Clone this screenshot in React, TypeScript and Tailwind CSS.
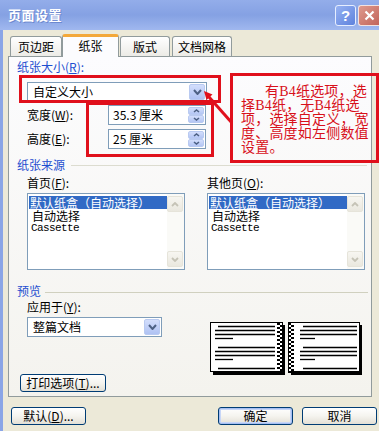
import React from "react";

function Chevron({ up = false, color = "#4D6185", w = 9, h = 6, sw = 2 }: { up?: boolean; color?: string; w?: number; h?: number; sw?: number }) {
  const d = up ? `M1 ${h - 1}L${w / 2} 1L${w - 1} ${h - 1}` : `M1 1L${w / 2} ${h - 1}L${w - 1} 1`;
  return (
    <svg width={w} height={h} viewBox={`0 0 ${w} ${h}`}>
      <path d={d} stroke={color} strokeWidth={sw} fill="none" />
    </svg>
  );
}

function DropButton() {
  return (
    <div className="w-[16px] shrink-0 rounded-[2px] border border-[#B9CAF1] bg-gradient-to-b from-[#D3DEFC] to-[#AFC2F3] flex items-center justify-center">
      <Chevron />
    </div>
  );
}

function Combo({ className, text }: { className: string; text: string }) {
  return (
    <div className={`flex bg-white border border-[#7F9DB9] p-[1px] ${className}`}>
      <div className="flex-1 flex items-center pl-[4px] whitespace-nowrap">{text}</div>
      <DropButton />
    </div>
  );
}

function Spin({ text }: { text: string }) {
  return (
    <div className="flex w-[98px] h-[20px] bg-white border border-[#7F9DB9] p-[1px]">
      <div className="flex-1 flex items-center pl-[3px] whitespace-nowrap">{text}</div>
      <div className="w-[16px] flex flex-col">
        <div className="flex-1 rounded-[2px] border border-[#B9CAF1] bg-gradient-to-b from-[#D3DEFC] to-[#B4C6F4] flex items-center justify-center">
          <Chevron up w={7} h={4} sw={1.6} />
        </div>
        <div className="flex-1 rounded-[2px] border border-[#B9CAF1] bg-gradient-to-b from-[#D3DEFC] to-[#B4C6F4] flex items-center justify-center">
          <Chevron w={7} h={4} sw={1.6} />
        </div>
      </div>
    </div>
  );
}

function ScrollBtn({ up = false }: { up?: boolean }) {
  return (
    <div className="h-[16px] rounded-[2px] border border-[#E6E4DA] bg-gradient-to-b from-[#F7F6F1] to-[#EAE8DF] flex items-center justify-center">
      <Chevron up={up} color="#C5C3B6" w={8} h={5} sw={1.8} />
    </div>
  );
}

function ListBox() {
  return (
    <div className="w-[158px] h-[77px] border border-[#7F9DB9] bg-white flex">
      <div className="flex-1 pt-[2px] pl-[1px]">
        <div className="h-[13px] leading-[13px] bg-[#316AC5] text-white pl-[1px] whitespace-nowrap">默认纸盒（自动选择）</div>
        <div className="h-[13px] leading-[13px] pl-[3px] whitespace-nowrap">自动选择</div>
        <div className="h-[13px] leading-[13px] pl-[2px] font-['Liberation_Mono',monospace] text-[11px] tracking-[-0.6px]">Cassette</div>
      </div>
      <div className="w-[17px] flex flex-col justify-between bg-[#FAFAF7] py-[2px] pr-[1px]">
        <ScrollBtn up />
        <ScrollBtn />
      </div>
    </div>
  );
}

function Btn({ className = "", children, def = false }: { className?: string; children: React.ReactNode; def?: boolean }) {
  return (
    <div
      className={`h-[18px] flex items-center justify-center rounded-[3px] border border-[#003C74] bg-gradient-to-b from-[#FFFFFF] via-[#F5F4EF] to-[#E3E0D6] whitespace-nowrap ${
        def ? "shadow-[inset_0_0_0_1px_#A6BFF2,inset_0_0_0_2px_#C7D6F7]" : ""
      } ${className}`}
    >
      {children}
    </div>
  );
}

function U({ c }: { c: string }) {
  return <span className="underline underline-offset-[1px]">{c}</span>;
}

function Tab({ className, children, selected = false }: { className: string; children: React.ReactNode; selected?: boolean }) {
  if (selected) {
    return (
      <div className={`h-[23px] -mb-px relative z-10 flex items-center justify-center rounded-t-[3px] border border-b-0 border-[#919B9C] border-t-[3px] border-t-[#F3A83A] bg-[#FCFCFE] pb-[2px] ${className}`}>
        {children}
      </div>
    );
  }
  return (
    <div className={`h-[20px] flex items-center justify-center rounded-t-[3px] border border-b-0 border-[#919B9C] bg-gradient-to-b from-[#FFFFFF] to-[#ECEBE6] ${className}`}>
      {children}
    </div>
  );
}

function Preview() {
  const leftLines: [number, number, number][] = [
    [8, 65, 4], [5, 65, 8], [5, 65, 12], [5, 23, 16],
    [8, 65, 25], [5, 65, 29], [5, 65, 33], [5, 23, 37],
    [8, 65, 46],
  ];
  const checks = [];
  for (let y = 1; y < 50; y += 4) {
    checks.push(<rect key={"a" + y} x={67} y={y} width={3} height={2} fill="#000" />);
    checks.push(<rect key={"b" + y} x={70} y={y + 2} width={3} height={2} fill="#000" />);
    checks.push(<rect key={"c" + y} x={78} y={y} width={3} height={2} fill="#000" />);
    checks.push(<rect key={"d" + y} x={81} y={y + 2} width={3} height={2} fill="#000" />);
  }
  return (
    <svg width="152" height="54" viewBox="0 0 152 54">
      <rect x="3" y="3" width="72" height="50" fill="#000" />
      <rect x="81" y="3" width="71" height="50" fill="#000" />
      <rect x="0.5" y="0.5" width="72" height="49" fill="#fff" stroke="#000" />
      <rect x="78.5" y="0.5" width="71" height="49" fill="#fff" stroke="#000" />
      {checks}
      {leftLines.map(([a, b, y], i) => (
        <line key={"l" + i} x1={a} x2={b} y1={y + 0.5} y2={y + 0.5} stroke="#000" strokeWidth="1.3" />
      ))}
      {leftLines.map(([a, b, y], i) => (
        <line key={"r" + i} x1={a + 85} x2={b === 23 ? 105 : 147} y1={y + 0.5} y2={y + 0.5} stroke="#000" strokeWidth="1.3" />
      ))}
    </svg>
  );
}

export default function App() {
  const red = "#E0101C";
  return (
    <div className="relative w-[379px] h-[431px] overflow-hidden flex flex-col bg-[#ECE9D8] text-[12px] leading-[14px] text-black font-['Noto_Sans_CJK_SC','Noto_Sans',sans-serif]">
      {/* Title bar */}
      <div className="h-[30px] shrink-0 flex items-center bg-gradient-to-b from-[#93ADEA] via-[#85A1E3] to-[#A0B8EF]">
        <span className="ml-[8px] text-[13px] font-bold text-white tracking-[0.5px] [text-shadow:1px_1px_0_#6C88CF]">页面设置</span>
        <div className="ml-auto flex items-center gap-[2px] mt-[1px]">
          <div className="w-[21px] h-[21px] rounded-[3px] border border-[#E6EEFF] bg-gradient-to-br from-[#97B2F2] to-[#5E82DD] flex items-center justify-center text-white font-bold text-[15px] font-['Liberation_Sans',sans-serif]">
            ?
          </div>
          <div className="w-[21px] h-[21px] rounded-l-[3px] border border-r-0 border-[#F2E2E0] bg-gradient-to-br from-[#DE9A8E] to-[#C2645A] flex items-center justify-center">
            <svg width="11" height="11" viewBox="0 0 11 11">
              <path d="M1.5 1.5L9.5 9.5M9.5 1.5L1.5 9.5" stroke="#fff" strokeWidth="2.2" />
            </svg>
          </div>
        </div>
      </div>

      <div className="flex-1 flex">
        <div className="w-[3px] bg-[#8AA5E6]" />
        <div className="flex-1 flex flex-col">
          {/* Tabs */}
          <div className="h-[26px] flex items-end pl-[7px]">
            <Tab className="w-[52px]">页边距</Tab>
            <Tab className="w-[57px]" selected>纸张</Tab>
            <Tab className="w-[50px] ml-[1px]">版式</Tab>
            <Tab className="w-[60px] ml-[2px]">文档网格</Tab>
          </div>

          {/* Panel */}
          <div className="ml-[5px] w-[364px] h-[341px] border border-[#919B9C] bg-gradient-to-b from-[#FCFCFE] to-[#F4F3EE] flex flex-col">
            <div className="mt-[3px] pl-[8px] h-[14px] text-[#1F4FD0]">
              纸张大小(<U c="R" />):
            </div>
            <Combo className="mt-[8px] ml-[18px] w-[180px] h-[20px]" text="自定义大小" />
            <div className="mt-[3px] flex items-center pl-[18px]">
              <div className="w-[81px]">
                宽度(<U c="W" />):
              </div>
              <Spin text="35.3 厘米" />
            </div>
            <div className="mt-[4px] flex items-center pl-[18px]">
              <div className="w-[81px]">
                高度(<U c="E" />):
              </div>
              <Spin text="25 厘米" />
            </div>

            <div className="mt-[9px] pl-[8px] h-[14px] flex items-center">
              <span className="text-[#1F4FD0]">纸张来源</span>
              <div className="flex-1 h-px bg-[#DCDCD0] ml-[6px] mr-[4px]" />
            </div>
            <div className="mt-[4px] flex pl-[18px] gap-[22px]">
              <div className="w-[158px] flex flex-col">
                <div className="h-[14px]">
                  首页(<U c="F" />):
                </div>
                <div className="mt-[3px]">
                  <ListBox />
                </div>
              </div>
              <div className="w-[158px] flex flex-col">
                <div className="h-[14px]">
                  其他页(<U c="O" />):
                </div>
                <div className="mt-[3px]">
                  <ListBox />
                </div>
              </div>
            </div>

            <div className="mt-[14px] pl-[8px] h-[14px] flex items-center">
              <span className="text-[#1F4FD0]">预览</span>
              <div className="flex-1 h-px bg-[#D0D0BF] ml-[4px] mr-[3px] mt-[2px]" />
            </div>
            <div className="flex">
              <div className="w-[201px] flex flex-col">
                <div className="mt-[2px] ml-[18px] h-[14px]">
                  应用于(<U c="Y" />):
                </div>
                <Combo className="mt-[3px] ml-[18px] w-[135px] h-[20px]" text="整篇文档" />
                <Btn className="mt-[37px] ml-[11px] w-[86px]">
                  <span>
                    打印选项(<U c="T" />)...
                  </span>
                </Btn>
              </div>
              <div className="mt-[24px]">
                <Preview />
              </div>
            </div>
          </div>

          {/* Bottom buttons */}
          <div className="mt-[10px] flex pl-[8px]">
            <Btn className="w-[75px]">
              <span>
                默认(<U c="D" />)...
              </span>
            </Btn>
            <Btn className="w-[75px] ml-[132px]" def>
              确定
            </Btn>
            <Btn className="w-[75px] ml-[9px]">取消</Btn>
          </div>
        </div>
      </div>

      {/* Red annotations */}
      <div className="absolute left-[19px] top-[75px] w-[202px] h-[28px] border-[3px] border-[#E0101C]" />
      <div className="absolute left-[86px] top-[102px] w-[128px] h-[55px] border-[3px] border-[#E0101C]" />
      <div className="absolute left-[230px] top-[73px] w-[149px] h-[90px] border-[3px] border-[#E0101C] pl-[8px] pt-[9px] text-[#D8101A] text-[14px] leading-[14px] tracking-[0.2px] font-['Liberation_Serif','Noto_Sans_CJK_SC',serif] whitespace-nowrap">
        <div className="pl-[24px]">有B4纸选项，选</div>
        <div>择B4纸，无B4纸选</div>
        <div>项，选择自定义，宽</div>
        <div>度、高度如左侧数值</div>
        <div>设置。</div>
      </div>
      <svg className="absolute left-0 top-0 pointer-events-none" width="379" height="431" viewBox="0 0 379 431">
        <line x1="232" y1="123" x2="209" y2="97" stroke={red} strokeWidth="3" />
        <polygon points="204,91 212.5,94.5 206.5,100" fill={red} />
      </svg>
    </div>
  );
}
